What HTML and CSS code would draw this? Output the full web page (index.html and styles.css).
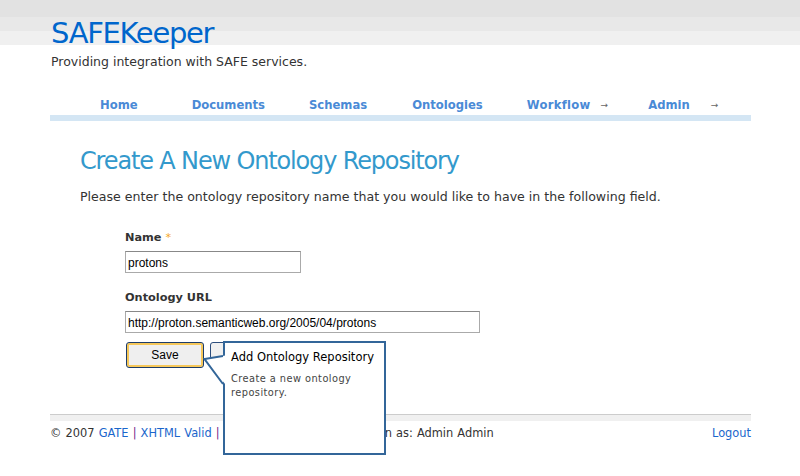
FILE: index.html
```html
<!DOCTYPE html>
<html>
<head>
<meta charset="utf-8">
<title>SAFEKeeper</title>
<link rel="stylesheet" href="styles.css">
</head>
<body>
<div class="band"></div>
<div class="page">
  <header class="header">
    <h1 class="logo">SAFEKeeper</h1>
    <p class="tagline">Providing integration with SAFE services.</p>
  </header>
  <nav class="nav">
    <a class="nav-item n-home" href="#">Home</a>
    <a class="nav-item n-docs" href="#">Documents</a>
    <a class="nav-item n-schemas" href="#">Schemas</a>
    <a class="nav-item n-onto" href="#">Ontologies</a>
    <a class="nav-item n-work" href="#">Workflow<span class="arr arr-w">&#8594;</span></a>
    <a class="nav-item n-admin" href="#">Admin<span class="arr arr-a">&#8594;</span></a>
  </nav>
  <main class="content">
    <h2 class="title">Create A New Ontology Repository</h2>
    <p class="intro">Please enter the ontology repository name that you would like to have in the following field.</p>
    <form class="form">
      <label class="label">Name <span class="req">*</span></label>
      <input class="field f-name" type="text" value="protons">
      <label class="label l-url">Ontology URL</label>
      <input class="field f-url" type="text" value="http://proton.semanticweb.org/2005/04/protons">
      <div class="buttons">
        <button class="btn btn-save" type="button">Save</button>
        <button class="btn btn-cancel" type="button">Cancel</button>
        <div class="tip">
          <svg class="tip-arrow" width="23" height="32" viewBox="0 0 23 32">
            <polygon points="22.5,0.5 1.5,4 22.5,29.5" fill="#fff"/>
            <polyline points="20,1 1.5,4 20,29" fill="none" stroke="#336699" stroke-width="2" stroke-linejoin="miter"/>
          </svg>
          <div class="tip-title">Add Ontology Repository</div>
          <div class="tip-body">Create a new ontology repository.</div>
        </div>
      </div>
    </form>
  </main>
  <footer class="footer">
    <div class="foot-left">&copy; 2007 <a href="#">GATE</a> <span class="sep">|</span> <a href="#">XHTML Valid</a> <span class="sep">|</span> <a href="#">CSS Valid</a> <span class="sep">|</span> <a href="#">About</a> <span class="sep">|</span> Logged in as: Admin Admin</div>
    <a class="logout" href="#">Logout</a>
  </footer>
</div>
</body>
</html>
```

FILE: styles.css
```css
* { box-sizing: border-box; }
html, body { margin: 0; padding: 0; background: #fff; }
body {
  font-family: "DejaVu Sans", Verdana, sans-serif;
  font-size: 13px;
  color: #333;
  position: relative;
  height: 476px;
  overflow: hidden;
}
a { text-decoration: none; }
.band {
  position: absolute;
  left: 0; right: 0; top: 0;
  height: 45px;
  background: linear-gradient(#e2e2e2 0, #e2e2e2 17px, #e8e8e8 17px, #e8e8e8 31px, #f0f0f0 31px, #f0f0f0 45px);
}
.page {
  position: relative;
  width: 701px;
  margin: 0 0 0 50px;
}
.header { padding-top: 15px; }
.logo {
  margin: 0 0 0 1px;
  font-family: "DejaVu Sans", Verdana, sans-serif;
  font-weight: normal;
  font-size: 29px;
  letter-spacing: -1.3px;
  line-height: 36px;
  color: #0066cc;
}
.tagline {
  margin: 3px 0 0 1px;
  font-size: 12.5px;
  line-height: 16px;
  color: #333;
}
.nav {
  margin-top: 28px;
  display: flex;
  align-items: center;
  height: 15px;
  padding-left: 50px;
  border-bottom: 6px solid #d4e6f4;
  box-sizing: content-box;
  padding-bottom: 2px;
}
.nav-item {
  font-weight: bold;
  font-size: 11.6px;
  line-height: 15px;
  color: #4a8ad6;
  white-space: nowrap;
}
.n-docs { margin-left: 54px; }
.n-schemas { margin-left: 44px; }
.n-onto { margin-left: 45px; }
.n-work { margin-left: 44px; letter-spacing: 0.3px; }
.n-admin { margin-left: 40px; }
.arr {
  font-weight: normal;
  font-size: 9px;
  letter-spacing: 0;
  color: #666;
  display: inline-block;
  vertical-align: 1px;
}
.arr-w { margin-left: 10px; }
.arr-a { margin-left: 21px; }
.content { padding-left: 30px; }
.title {
  margin: 24px 0 0;
  font-family: "DejaVu Sans", Verdana, sans-serif;
  font-weight: normal;
  font-size: 24px;
  letter-spacing: -1.15px;
  line-height: 32px;
  color: #3399cc;
}
.intro {
  margin: 12px 0 0;
  font-size: 12.6px;
  line-height: 16px;
  color: #333;
}
.form {
  padding-left: 45px;
  display: flex;
  flex-direction: column;
  align-items: flex-start;
}
.label {
  margin-top: 26px;
  font-weight: bold;
  font-size: 11.3px;
  line-height: 14px;
  color: #333;
}
.l-url { margin-top: 18px; }
.req { color: #f5a623; font-weight: normal; }
.field {
  margin-top: 6px;
  height: 22px;
  border: 1px solid #aaa;
  border-top-color: #888;
  padding: 1px 2px 0;
  font-family: "Liberation Sans", Arial, sans-serif;
  font-size: 12px;
  color: #000;
  background: #fff;
}
.f-name { width: 176px; }
.f-url { width: 355px; }
.buttons {
  position: relative;
  margin-top: 9px;
  display: flex;
  gap: 6px;
  margin-left: 1px;
}
.btn {
  height: 26px;
  border: 1px solid #1c3c6a;
  border-radius: 3px;
  box-shadow: inset 0 0 0 2px #f5c75a;
  background: #efefef;
  font-family: "Liberation Sans", Arial, sans-serif;
  font-size: 12px;
  color: #000;
  padding: 0;
}
.btn-save { width: 78px; }
.btn-cancel {
  width: 70px;
  box-shadow: none;
  border-color: #2c4d7c;
  background: #f0f0f0;
}
.tip {
  position: absolute;
  left: 97px;
  top: -1px;
  width: 163px;
  height: 114px;
  background: #fff;
  border: 2px solid #336699;
  padding: 6px 6px;
}
.tip-arrow {
  position: absolute;
  left: -22px;
  top: 12px;
}
.tip-title {
  font-size: 11.5px;
  line-height: 16px;
  color: #000;
}
.tip-body {
  margin-top: 7px;
  font-size: 9.8px;
  line-height: 14px;
  letter-spacing: 0.45px;
  color: #444;
}
.footer {
  margin-top: 46px;
  border-top: 1px solid #cccccc;
  padding-top: 11px;
  background: linear-gradient(#f0f0f0 0, #f0f0f0 6px, #fff 6px);
  display: flex;
  justify-content: space-between;
  font-size: 11.4px;
  line-height: 14px;
  color: #333;
}
.foot-left { word-spacing: 0.5px; }
.foot-left a, .logout { color: #1a66cc; }
.sep { color: #7a2a8a; }
```
